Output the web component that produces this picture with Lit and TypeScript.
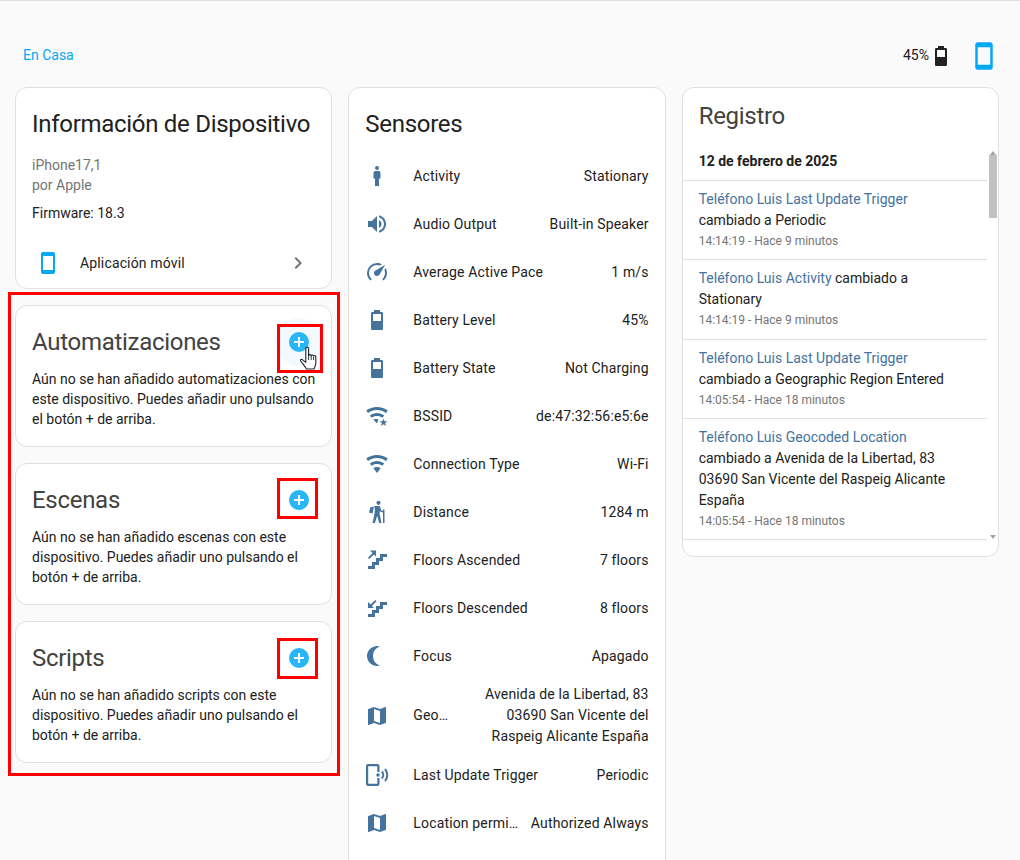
import { LitElement, html, css, svg } from "lit";
import { customElement } from "lit/decorators.js";

// mdi-style paths, viewBox 0 0 24 24
const icons: Record<string, any> = {
  human: svg`<path d="M12,2A2,2 0 0,1 14,4A2,2 0 0,1 12,6A2,2 0 0,1 10,4A2,2 0 0,1 12,2M10.5,7H13.5A2,2 0 0,1 15.5,9V14.5H14V22H10V14.5H8.5V9A2,2 0 0,1 10.5,7Z"/>`,
  volume: svg`<path d="M14,3.23V5.29C16.89,6.15 19,8.83 19,12C19,15.17 16.89,17.84 14,18.7V20.77C18,19.86 21,16.28 21,12C21,7.72 18,4.14 14,3.23M16.5,12C16.5,10.23 15.5,8.71 14,7.97V16C15.5,15.29 16.5,13.76 16.5,12M3,9V15H7L12,20V4L7,9H3Z"/>`,
  speed: svg`<path d="M12,16A3,3 0 0,1 9,13C9,11.88 9.61,10.9 10.5,10.39L20.21,4.77L14.68,14.35C14.18,15.33 13.17,16 12,16M12,3C13.81,3 15.5,3.5 16.97,4.32L14.87,5.53C14,5.19 13,5 12,5A8,8 0 0,0 4,13C4,15.21 4.89,17.21 6.34,18.65H6.35C6.74,19.04 6.74,19.67 6.35,20.06C5.96,20.45 5.32,20.45 4.93,20.07V20.07C3.12,18.26 2,15.76 2,13A10,10 0 0,1 12,3M22,13C22,15.76 20.88,18.26 19.07,20.07V20.07C18.68,20.45 18.05,20.45 17.66,20.06C17.27,19.67 17.27,19.04 17.66,18.65V18.65C19.11,17.2 20,15.21 20,13C20,12 19.81,11 19.46,10.1L20.67,8C21.5,9.5 22,11.18 22,13Z"/>`,
  battery: svg`<path fill-rule="evenodd" d="M8,6H16V13H8ZM16.67,4H15V2H9V4H7.33A1.33,1.33 0 0,0 6,5.33V20.67C6,21.4 6.6,22 7.33,22H16.67A1.33,1.33 0 0,0 18,20.67V5.33C18,4.6 17.4,4 16.67,4Z"/>`,
  wifiStar: svg`<path d="M12,3C7.95,3 4.21,4.34 1.2,6.6L3,9C5.5,7.12 8.62,6 12,6C15.38,6 18.5,7.12 21,9L22.8,6.6C19.79,4.34 16.05,3 12,3M12,9C9.3,9 6.81,9.89 4.8,11.4L6.6,13.8C8.1,12.67 9.97,12 12,12C14.03,12 15.9,12.67 17.4,13.8L19.2,11.4C17.19,9.89 14.7,9 12,9M8.4,15.2L11.5,19.3L13,17.3V15H8.4M18.5,14.5L19.5,17.2L22.5,17.3L20.1,19.1L21,22L18.5,20.3L16,22L16.9,19.1L14.5,17.3L17.5,17.2Z"/>`,
  wifi: svg`<path d="M12,21L15.6,16.2C14.6,15.45 13.35,15 12,15C10.65,15 9.4,15.45 8.4,16.2L12,21M12,3C7.95,3 4.21,4.34 1.2,6.6L3,9C5.5,7.12 8.62,6 12,6C15.38,6 18.5,7.12 21,9L22.8,6.6C19.79,4.34 16.05,3 12,3M12,9C9.3,9 6.81,9.89 4.8,11.4L6.6,13.8C8.1,12.67 9.97,12 12,12C14.03,12 15.9,12.67 17.4,13.8L19.2,11.4C17.19,9.89 14.7,9 12,9Z"/>`,
  hiking: svg`<circle cx="13.500" cy="2.800" r="2.100"/><path d="M9.200,6H13.800C14.500,6 15,6.500 15.200,7.100L16,10L18,11V9.500H19.500V23H18V12.600L14.800,11.200L14.500,13.600L16.500,23H14.200L12.200,15.800L9.900,23H7.500L9.600,13.200L9.800,9Z"/><path d="M5.400,7.200L8.800,6.600L7.600,13.500L4,12.600Z"/>`,
  stairsUp: svg`<path d="M22,6V9H18V13H14V17H10V21H3V18H7V14H11V10H15V6H22Z"/><path d="M5,2.500H11V8.500L8.900,6.400L4.300,11L3,9.700L7.600,5.100Z"/>`,
  stairsDown: svg`<path d="M22,6V9H18V13H14V17H10V21H3V18H7V14H11V10H15V6H22Z"/><path d="M3,6V12H9L6.900,9.900L11.500,5.300L10.200,4L5.600,8.600Z"/>`,
  moon: svg`<path d="M2,12A10,10 0 0,0 15,21.54A10,10 0 0,1 15,2.46A10,10 0 0,0 2,12Z"/>`,
  map: svg`<path d="M15,19L9,16.89V5L15,7.11M20.5,3C20.44,3 20.39,3 20.34,3L15,5.1L9,3L3.36,4.9C3.15,4.97 3,5.15 3,5.38V20.5A0.5,0.5 0 0,0 3.5,21C3.55,21 3.61,21 3.66,20.97L9,18.9L15,21L20.64,19.1C20.85,19 21,18.85 21,18.62V3.5A0.5,0.5 0 0,0 20.5,3Z"/>`,
  phoneWireless: svg`<path d="M3,1H12.500A2,2 0 0,1 14.500,3V9H12.300V3.200H3.200V20.800H12.300V15H14.500V21A2,2 0 0,1 12.500,23H3A2,2 0 0,1 1,21V3A2,2 0 0,1 3,1Z"/><circle cx="13" cy="12" r="1.700"/><path d="M16.800,8.500A5,5 0 0,1 16.800,15.500M20,6A9,9 0 0,1 20,18" fill="none" stroke="currentColor" stroke-width="2"/>`,
  cellphone: svg`<path d="M17,19H7V5H17M17,1H7C5.89,1 5,1.89 5,3V21A2,2 0 0,0 7,23H17A2,2 0 0,0 19,21V3C19,1.89 18.1,1 17,1Z"/>`,
  chevron: svg`<path d="M8.59,16.58L13.17,12L8.59,7.41L10,6L16,12L10,18L8.59,16.58Z"/>`,
  plus: svg`<path d="M17,13H13V17H11V13H7V11H11V7H13V11H17M12,2A10,10 0 0,0 2,12A10,10 0 0,0 12,22A10,10 0 0,0 22,12A10,10 0 0,0 12,2Z"/>`,
};

const icon = (name: string, cls = "") =>
  html`<svg class="icon ${cls}" viewBox="0 0 24 24" fill="currentColor">${icons[name]}</svg>`;

const sensors = [
  { icon: "human", label: "Activity", value: "Stationary" },
  { icon: "volume", label: "Audio Output", value: "Built-in Speaker" },
  { icon: "speed", label: "Average Active Pace", value: "1 m/s" },
  { icon: "battery", label: "Battery Level", value: "45%" },
  { icon: "battery", label: "Battery State", value: "Not Charging" },
  { icon: "wifiStar", label: "BSSID", value: "de:47:32:56:e5:6e" },
  { icon: "wifi", label: "Connection Type", value: "Wi-Fi" },
  { icon: "hiking", label: "Distance", value: "1284 m" },
  { icon: "stairsUp", label: "Floors Ascended", value: "7 floors" },
  { icon: "stairsDown", label: "Floors Descended", value: "8 floors" },
  { icon: "moon", label: "Focus", value: "Apagado" },
  { icon: "map", label: "Geocoded Location", value: "Avenida de la Libertad, 83 03690 San Vicente del Raspeig Alicante España" },
  { icon: "phoneWireless", label: "Last Update Trigger", value: "Periodic" },
  { icon: "map", label: "Location permission", value: "Authorized Always" },
];

const logEntries = [
  { name: "Teléfono Luis Last Update Trigger", text: "cambiado a Periodic", time: "14:14:19 - Hace 9 minutos" },
  { name: "Teléfono Luis Activity", text: "cambiado a Stationary", time: "14:14:19 - Hace 9 minutos" },
  { name: "Teléfono Luis Last Update Trigger", text: "cambiado a Geographic Region Entered", time: "14:05:54 - Hace 18 minutos" },
  { name: "Teléfono Luis Geocoded Location", text: "cambiado a Avenida de la Libertad, 83 03690 San Vicente del Raspeig Alicante España", time: "14:05:54 - Hace 18 minutos" },
];

const related = [
  { title: "Automatizaciones", text: "Aún no se han añadido automatizaciones con este dispositivo. Puedes añadir uno pulsando el botón + de arriba.", hover: true },
  { title: "Escenas", text: "Aún no se han añadido escenas con este dispositivo. Puedes añadir uno pulsando el botón + de arriba.", hover: false },
  { title: "Scripts", text: "Aún no se han añadido scripts con este dispositivo. Puedes añadir uno pulsando el botón + de arriba.", hover: false },
];

@customElement("app-root")
export class AppRoot extends LitElement {
  static styles = css`
    :host {
      display: block;
      height: 860px;
      overflow: hidden;
      box-sizing: border-box;
      border-top: 1px solid #e0e0e0;
      background: #fafafa;
      font-family: Roboto, "Liberation Sans", sans-serif;
      font-size: 14px;
      line-height: 21px;
      color: #212121;
    }
    .icon {
      width: 24px;
      height: 24px;
      flex: none;
      display: block;
    }
    .topbar {
      display: flex;
      align-items: center;
      height: 32px;
      padding: 39px 21px 15px 23px;
    }
    .area {
      flex: 1;
      color: #03a9f4;
      margin-top: -2px;
    }
    .percent {
      color: #212121;
      margin-top: -2px;
    }
    .topbar .device {
      width: 30px;
      height: 30px;
      margin-left: 16px;
      color: #03a9f4;
    }
    .columns {
      display: grid;
      grid-template-columns: repeat(3, 1fr);
      gap: 16px;
      align-items: start;
      padding: 0 21px 0 15px;
    }
    .column {
      display: flex;
      flex-direction: column;
      gap: 16px;
      min-width: 0;
    }
    .card {
      background: #fff;
      border: 1px solid #e0e0e0;
      border-radius: 12px;
    }
    h2 {
      margin: 0;
      font-size: 24px;
      font-weight: 400;
      line-height: 32px;
      letter-spacing: -0.29px;
    }
    .info {
      padding: 20px 16px 0;
      height: 202px;
      box-sizing: border-box;
    }
    .model {
      margin-top: 15px;
      color: #757575;
      line-height: 20px;
    }
    .firmware {
      margin-top: 8px;
    }
    .integration {
      display: flex;
      align-items: center;
      margin-top: 15px;
      height: 48px;
      letter-spacing: 0.15px;
    }
    .integration .phone {
      margin: 0 20px 0 4px;
      color: #03a9f4;
    }
    .integration .name {
      flex: 1;
    }
    .integration .chevron {
      margin-right: 5px;
      color: #757575;
    }
    .related {
      padding: 20px 16px 0;
      height: 142px;
      box-sizing: border-box;
      position: relative;
    }
    .related h2 {
      color: #424242;
    }
    .related p {
      margin: 11px 0 0;
      line-height: 20px;
    }
    .related-head {
      display: flex;
      align-items: center;
      justify-content: space-between;
    }
    .add {
      color: #29b6f6;
      margin-right: 4px;
    }
    .add.hover {
      background: #f2faff;
      border-radius: 50%;
      box-shadow: 0 0 0 12px #f2faff;
    }
    .cursor {
      position: absolute;
      left: 284px;
      top: 40px;
      width: 18px;
      height: 24px;
    }
    .sensors {
      height: 900px;
      padding: 20px 16px 0;
      box-sizing: border-box;
    }
    .sensor-list {
      margin-top: 12px;
      letter-spacing: 0.15px;
    }
    .sensor {
      display: flex;
      align-items: center;
      min-height: 48px;
    }
    .sensor.tall {
      padding: 4px 0;
    }
    .sensor .icon {
      color: #44739e;
      margin-right: 24px;
    }
    .sensor .label {
      flex: 1;
      min-width: 0;
      white-space: nowrap;
      overflow: hidden;
      text-overflow: ellipsis;
    }
    .sensor .value {
      flex: none;
      max-width: 186px;
      margin-left: 12px;
      text-align: right;
    }
    .log {
      height: 470px;
      box-sizing: border-box;
      padding-top: 12px;
      display: flex;
      flex-direction: column;
    }
    .log h2 {
      padding: 0 16px;
      color: #424242;
    }
    .log-body {
      display: flex;
      margin-top: 18px;
      height: 391px;
    }
    .log-list {
      flex: 1;
      min-width: 0;
      overflow: hidden;
    }
    .log-date {
      font-weight: 700;
      height: 29px;
      padding: 1px 16px 0;
      line-height: 21px;
      border-bottom: 1px solid #e0e0e0;
    }
    .entry {
      padding: 8px 16px 8.33px;
      border-bottom: 1px solid #e0e0e0;
    }
    .entry .who {
      color: #44739e;
    }
    .entry .time {
      font-size: 12px;
      line-height: 20px;
      color: #757575;
    }
    .scrollbar {
      width: 11px;
      flex: none;
      display: flex;
      flex-direction: column;
      align-items: center;
    }
    .arrow {
      width: 0;
      height: 0;
      border-left: 3.5px solid transparent;
      border-right: 3.5px solid transparent;
      margin-top: 1px;
    }
    .arrow.up {
      border-bottom: 4px solid #a3a3a3;
    }
    .arrow.down {
      border-top: 4px solid #a3a3a3;
      margin-top: auto;
      margin-bottom: 2px;
    }
    .thumb {
      width: 8px;
      height: 63px;
      background: #c1c1c1;
    }
    /* red annotation boxes drawn over the page */
    .mark {
      position: absolute;
      box-sizing: border-box;
      border: 3px solid #f00;
      pointer-events: none;
    }
    .mark.outer {
      left: 8px;
      top: 291px;
      width: 332px;
      height: 484px;
    }
    .mark.first {
      left: 277px;
      top: 323px;
      width: 46px;
      height: 49px;
    }
    .mark.second {
      left: 277px;
      top: 477px;
      width: 41px;
      height: 41px;
    }
    .mark.third {
      left: 277px;
      top: 637px;
      width: 41px;
      height: 41px;
    }
    .page {
      position: relative;
    }
  `;

  renderRelated(r: (typeof related)[number]) {
    return html`<section class="card related">
      <div class="related-head">
        <h2>${r.title}</h2>
        ${icon("plus", r.hover ? "add hover" : "add")}
      </div>
      <p>${r.text}</p>
      ${r.hover
        ? html`<svg class="cursor" viewBox="0 0 18 24">
            <path
              d="M5.800 2.400c0-1.600 2.800-1.600 2.800 0V9.500c.4-1.200 2.400-1.100 2.600.2.500-1 2.200-.9 2.400.3.500-.8 2-.6 2.200.6V17c0 2.500-1 4.200-1.800 6H6.500C5 20.500 2.800 18 .7 15c-.6-1 .2-2 1.300-1.600l3.800 3z"
              fill="#fff"
              stroke="#1c2430"
              stroke-width="1.100"
              stroke-linejoin="round"
            />
            <path d="M8.600 9.500V14M11.200 10V14M13.600 10.500V14" stroke="#1c2430" stroke-width=".9" fill="none" />
          </svg>`
        : ""}
    </section>`;
  }

  render() {
    return html`<div class="page">
      <div class="topbar">
        <span class="area">En Casa</span>
        <span class="percent">45%</span>
        ${icon("battery")}
        ${icon("cellphone", "device")}
      </div>
      <div class="columns">
        <div class="column">
          <section class="card info">
            <h2>Información de Dispositivo</h2>
            <div class="model">iPhone17,1<br />por Apple</div>
            <div class="firmware">Firmware: 18.3</div>
            <div class="integration">
              ${icon("cellphone", "phone")}
              <span class="name">Aplicación móvil</span>
              ${icon("chevron", "chevron")}
            </div>
          </section>
          ${related.map((r) => this.renderRelated(r))}
        </div>
        <div class="column">
          <section class="card sensors">
            <h2>Sensores</h2>
            <div class="sensor-list">
              ${sensors.map(
                (s) => html`<div class="sensor ${s.value.length > 30 ? "tall" : ""}">
                  ${icon(s.icon)}
                  <span class="label">${s.label}</span>
                  <span class="value">${s.value}</span>
                </div>`
              )}
            </div>
          </section>
        </div>
        <div class="column">
          <section class="card log">
            <h2>Registro</h2>
            <div class="log-body">
              <div class="log-list">
                <div class="log-date">12 de febrero de 2025</div>
                ${logEntries.map(
                  (e) => html`<div class="entry">
                    <div><span class="who">${e.name}</span> ${e.text}</div>
                    <div class="time">${e.time}</div>
                  </div>`
                )}
              </div>
              <div class="scrollbar">
                <div class="arrow up"></div>
                <div class="thumb"></div>
                <div class="arrow down"></div>
              </div>
            </div>
          </section>
        </div>
      </div>
      <div class="mark outer"></div>
      <div class="mark first"></div>
      <div class="mark second"></div>
      <div class="mark third"></div>
    </div>`;
  }
}
